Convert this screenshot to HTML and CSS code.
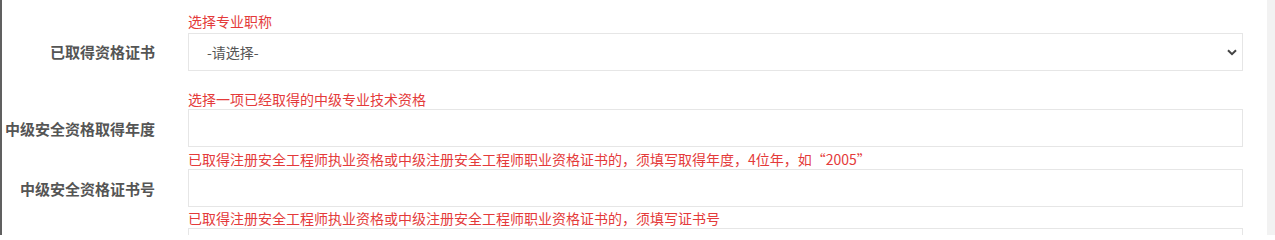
FILE: index.html
```html
<!DOCTYPE html>
<html lang="zh-CN">
<head>
<meta charset="utf-8">
<title>资格信息</title>
<link rel="stylesheet" href="styles.css">
</head>
<body>
<div class="page">
  <div class="main">
    <form class="form">
      <div class="hint hint-1">选择专业职称</div>
      <label class="label">已取得资格证书</label>
      <div class="control select-wrap box-1">
        <select class="box select">
          <option>-请选择-</option>
        </select>
        <svg class="chevron" width="10" height="7" viewBox="0 0 10 7"><path d="M1 1.2 L5 5.2 L9 1.2" fill="none" stroke="#444" stroke-width="2"/></svg>
      </div>
      <div class="hint hint-2">选择一项已经取得的中级专业技术资格</div>
      <label class="label">中级安全资格取得年度</label>
      <input class="box control" type="text">
      <div class="hint hint-3">已取得注册安全工程师执业资格或中级注册安全工程师职业资格证书的，须填写取得年度，4位年，如“2005”</div>
      <label class="label">中级安全资格证书号</label>
      <input class="box control" type="text">
      <div class="hint hint-4">已取得注册安全工程师执业资格或中级注册安全工程师职业资格证书的，须填写证书号</div>
      <label class="label"></label>
      <input class="box control box-4" type="text">
    </form>
  </div>
  <div class="scroll"></div>
</div>
</body>
</html>
```

FILE: styles.css
```css
html, body {
  margin: 0;
  padding: 0;
  background: #ffffff;
}

body {
  font-family: "Noto Sans CJK SC", "Noto Sans", sans-serif;
  overflow: hidden;
}

.page {
  display: flex;
  height: 235px;
  overflow: hidden;
}

.main {
  flex: 1;
  border-left: 2px solid #606060;
  padding: 11px 24px 0 0;
  min-width: 0;
}

.scroll {
  width: 8px;
  background: #f2f2f2;
}

.form {
  display: grid;
  grid-template-columns: 153px 1fr;
  column-gap: 33px;
  align-items: center;
}

.hint {
  grid-column: 2;
  color: #e43a3a;
  font-size: 14px;
  line-height: 20px;
  white-space: nowrap;
}

.hint-2 { margin-top: 18px; }
.hint-3 { margin-top: 2px; }
.hint-4 { margin-top: 1px; }

.label {
  grid-column: 1;
  text-align: right;
  font-size: 15px;
  font-weight: bold;
  color: #555555;
  white-space: nowrap;
  direction: rtl;
  overflow: visible;
}

.control {
  grid-column: 2;
}

.box {
  display: block;
  box-sizing: border-box;
  width: 100%;
  height: 38px;
  margin: 0;
  border: 1px solid #e6e6e6;
  background: #ffffff;
  font-family: inherit;
  font-size: 14px;
  color: #555555;
  outline: none;
}

.box-1 { margin-top: 2px; }

.select-wrap {
  position: relative;
}

.select {
  appearance: none;
  -webkit-appearance: none;
  padding: 0 30px 0 18px;
}

.chevron {
  position: absolute;
  right: 6px;
  top: 16px;
}
```
